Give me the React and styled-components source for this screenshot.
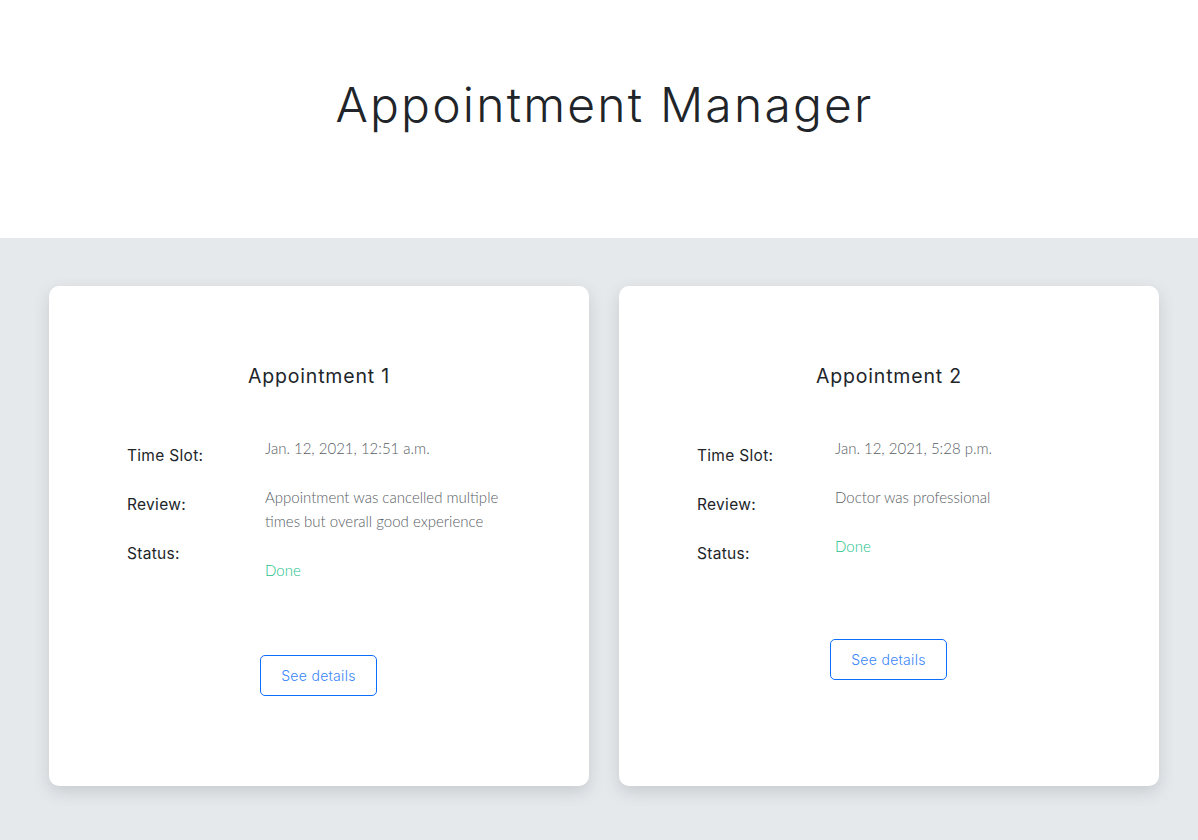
import React from "react";
import styled, { createGlobalStyle } from "styled-components";

const Global = createGlobalStyle`
  html, body { margin: 0; padding: 0; }
  body {
    background: #e6e9ec;
    font-family: "Inter", "Liberation Sans", sans-serif;
    color: #212529;
  }
`;

const Header = styled.header`
  background: #ffffff;
  height: 238px;
  display: flex;
  justify-content: center;
  align-items: flex-start;
`;

const Title = styled.h1`
  margin: 74px 0 0 11px;
  font-family: "Inter", sans-serif;
  font-weight: 300;
  font-size: 48px;
  line-height: 62px;
  letter-spacing: 2.2px;
  color: #212529;
`;

const Main = styled.main`
  display: flex;
  gap: 30px;
  padding: 48px 39px 54px 49px;
`;

const Card = styled.section`
  width: 540px;
  height: 500px;
  box-sizing: border-box;
  background: #fff;
  border-radius: 10px;
  box-shadow: 0 6px 16px rgba(60, 70, 80, 0.18);
  padding: 75px 74px 0 78px;
  display: flex;
  flex-direction: column;
`;

const CardTitle = styled.h2`
  margin: 0 0 45px;
  text-align: center;
  font-family: "Inter", sans-serif;
  font-weight: 400;
  font-size: 19.5px;
  line-height: 30px;
  letter-spacing: 0.8px;
  color: #212529;
  transform: translateX(-2px);
`;

const Grid = styled.div`
  display: grid;
  grid-template-columns: 138px 1fr;
  align-items: start;
`;

const Col = styled.div`
  display: flex;
  flex-direction: column;
  gap: 25px;
  padding-top: ${(p) => p.$offset || 0}px;
`;

const Label = styled.div`
  font-family: "Inter", sans-serif;
  font-size: 15.5px;
  line-height: 24px;
  letter-spacing: 0.3px;
  color: #212529;
`;

const Value = styled.div`
  font-family: "Lato", sans-serif;
  font-weight: 300;
  font-size: 15px;
  line-height: 24px;
  color: ${(p) => (p.$status ? "#1cbf8a" : "#585e65")};
`;

const Button = styled.button`
  align-self: center;
  margin: 73px 0 0 -5px;
  width: 117px;
  height: 41px;
  background: #fff;
  border: 1px solid #0d6efd;
  border-radius: 5px;
  color: #3a86fb;
  font-family: "Inter", sans-serif;
  font-weight: 300;
  font-size: 14px;
  letter-spacing: 0.3px;
  cursor: pointer;
`;

const appointments = [
  {
    id: 1,
    time: "Jan. 12, 2021, 12:51 a.m.",
    review: "Appointment was cancelled multiple times but overall good experience",
    status: "Done",
  },
  {
    id: 2,
    time: "Jan. 12, 2021, 5:28 p.m.",
    review: "Doctor was professional",
    status: "Done",
  },
];

export default function App() {
  return (
    <>
      <Global />
      <Header>
        <Title>Appointment Manager</Title>
      </Header>
      <Main>
        {appointments.map((a) => (
          <Card key={a.id}>
            <CardTitle>Appointment {a.id}</CardTitle>
            <Grid>
              <Col $offset={8}>
                <Label>Time Slot:</Label>
                <Label>Review:</Label>
                <Label>Status:</Label>
              </Col>
              <Col>
                <Value>{a.time}</Value>
                <Value>{a.review}</Value>
                <Value $status>{a.status}</Value>
              </Col>
            </Grid>
            <Button>See details</Button>
          </Card>
        ))}
      </Main>
    </>
  );
}
